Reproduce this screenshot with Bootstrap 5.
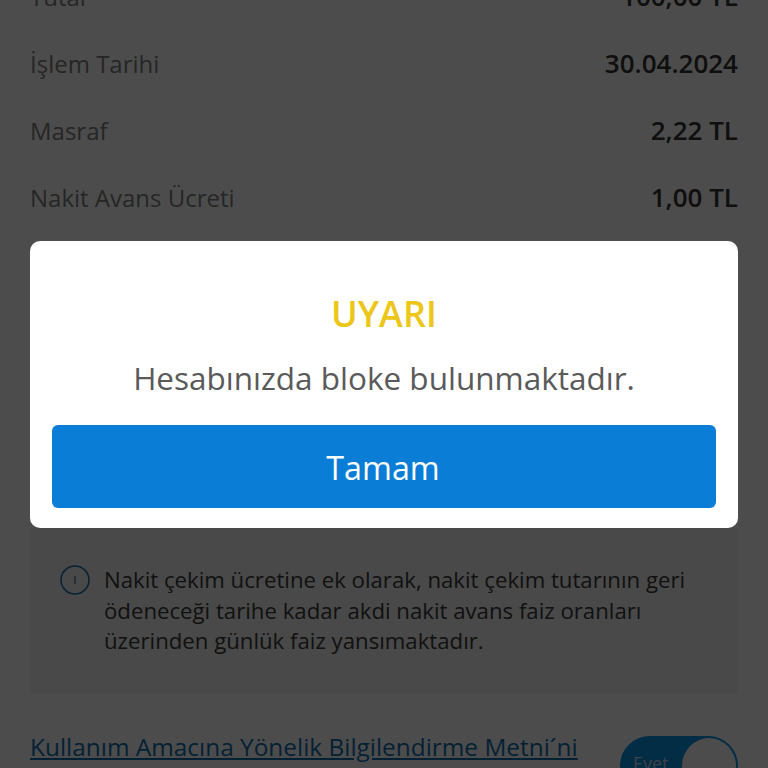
<!doctype html>
<html lang="tr">
<head>
<meta charset="utf-8">
<title>Uyarı</title>
<link href="https://cdn.jsdelivr.net/npm/bootstrap@5.3.0/dist/css/bootstrap.min.css" rel="stylesheet">
<style>
html,body{height:768px;overflow:hidden;background:#fff}
body{font-family:"Open Sans","Noto Sans",sans-serif;color:#1c1c1c}
.page-view{height:787px;overflow:hidden;padding:0 30px;margin-top:-19px}
.sum-row{height:67px;font-size:24px;line-height:32px}
.sum-label{color:#808080}
.sum-value{color:#333;font-weight:600;font-size:26px;line-height:30px}
.sum-gap{height:279px}
.note-box{background:#f3f3f3;height:165px;padding:37px 30px 0 30px;font-size:22.2px;line-height:30.5px;color:#3b3b3b;gap:14px;margin-bottom:37px}
.note-icon{width:30px;height:30px;flex:none}
.note-text{width:610px}
.use-link{font-size:24.4px;line-height:34px;color:#0f6fb0;text-decoration:underline;white-space:nowrap}
.use-switch{width:118px;height:60px;border-radius:30px;background:#0a93e6;border:2px solid #0a93e6;padding-left:11px;color:#c8dcf0;font-size:18px;line-height:50px;flex:none;margin-top:6px}
.use-knob{width:54px;height:56px;border-radius:50%;background:#fff;top:0;right:0}
.dim-layer{position:fixed;inset:0;background:rgba(0,0,0,.7);z-index:1050}
.alert-card{position:fixed;top:241px;left:30px;width:708px;height:287px;background:#fff;border:0;border-radius:10px;z-index:1060;padding:50px 22px 20px;text-align:center}
.alert-title{font-size:36px;line-height:46px;font-weight:600;color:#edc61a;margin:0}
.alert-body{font-size:31.5px;line-height:42px;color:#5a5a5a;margin:20px 0 26px}
.alert-btn{height:83px;width:664px;background:#0a7ed6;border:0;border-radius:6px;color:#fff;font-size:32.3px;padding:1px 2px 0 0}
</style>
</head>
<body>
<main class="page-view">
  <div class="sum-row d-flex justify-content-between align-items-start"><span class="sum-label">Tutar</span><span class="sum-value">100,00 TL</span></div>
  <div class="sum-row d-flex justify-content-between align-items-start"><span class="sum-label">İşlem Tarihi</span><span class="sum-value">30.04.2024</span></div>
  <div class="sum-row d-flex justify-content-between align-items-start"><span class="sum-label">Masraf</span><span class="sum-value">2,22 TL</span></div>
  <div class="sum-row d-flex justify-content-between align-items-start"><span class="sum-label">Nakit Avans Ücreti</span><span class="sum-value">1,00 TL</span></div>
  <div class="sum-gap"></div>
  <div class="note-box d-flex">
    <svg class="note-icon" viewBox="0 0 30 30" aria-hidden="true"><circle cx="15" cy="15" r="14" fill="none" stroke="#1f6ea8" stroke-width="1.5"/><path d="M15 11v8" stroke="#1f6ea8" stroke-width="1.2"/></svg>
    <div class="note-text">Nakit çekim ücretine ek olarak, nakit çekim tutarının geri ödeneceği tarihe kadar akdi nakit avans faiz oranları üzerinden günlük faiz yansımaktadır.</div>
  </div>
  <div class="d-flex justify-content-between align-items-start">
    <a class="use-link" href="#">Kullanım Amacına Yönelik Bilgilendirme Metni´ni</a>
    <div class="use-switch position-relative">Evet<span class="use-knob position-absolute"></span></div>
  </div>
</main>
<div class="dim-layer"></div>
<section class="alert-card card">
  <h2 class="alert-title">UYARI</h2>
  <p class="alert-body">Hesabınızda bloke bulunmaktadır.</p>
  <button type="button" class="btn alert-btn">Tamam</button>
</section>
<script src="https://cdn.jsdelivr.net/npm/bootstrap@5.3.0/dist/js/bootstrap.bundle.min.js"></script>
</body>
</html>
